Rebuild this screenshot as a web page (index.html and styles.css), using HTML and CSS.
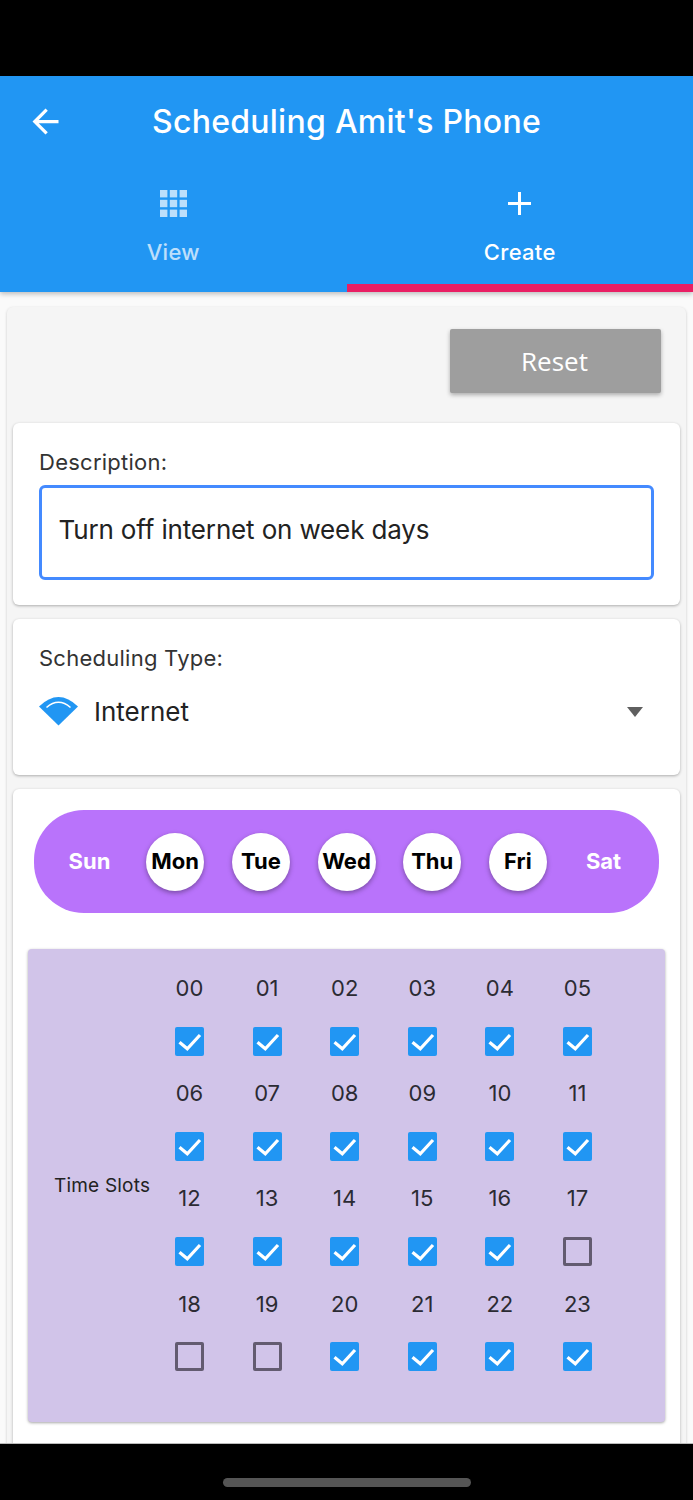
FILE: index.html
```html
<!DOCTYPE html>
<html lang="en">
<head>
<meta charset="utf-8">
<title>Scheduling Amit's Phone</title>
<link rel="stylesheet" href="styles.css">
</head>
<body>
<svg class="defs" width="0" height="0" aria-hidden="true">
  <symbol id="tick" viewBox="0 0 29 29"><path d="M4.5 15.2l7.8 6.6L25 8" fill="none" stroke="#fff" stroke-width="3.2"/></symbol>
</svg>
<div class="screen">
  <div class="status"></div>
  <header class="appbar">
    <div class="titlerow">
      <svg class="back" viewBox="0 0 24 24"><path d="M20 11H7.83l5.59-5.59L12 4l-8 8 8 8 1.41-1.41L7.83 13H20v-2z" fill="#fff"/></svg>
      <h1 class="title">Scheduling Amit's Phone</h1>
    </div>
    <nav class="tabs">
      <div class="tab">
        <svg class="tabicon dim" viewBox="0 0 27 27" fill="#fff">
          <rect x="0" y="0" width="7.4" height="7.4"/><rect x="9.8" y="0" width="7.4" height="7.4"/><rect x="19.6" y="0" width="7.4" height="7.4"/>
          <rect x="0" y="9.8" width="7.4" height="7.4"/><rect x="9.8" y="9.8" width="7.4" height="7.4"/><rect x="19.6" y="9.8" width="7.4" height="7.4"/>
          <rect x="0" y="19.6" width="7.4" height="7.4"/><rect x="9.8" y="19.6" width="7.4" height="7.4"/><rect x="19.6" y="19.6" width="7.4" height="7.4"/>
        </svg>
        <span class="tablabel dim">View</span>
      </div>
      <div class="tab active">
        <svg class="tabicon" viewBox="0 0 27 27"><path d="M12 2h3v10h10v3H15v10h-3V15H2v-3h10z" fill="#fff"/></svg>
        <span class="tablabel">Create</span>
      </div>
    </nav>
  </header>
  <main class="content">
    <div class="outer">
      <div class="actions"><button class="reset">Reset</button></div>

      <section class="card desc">
        <div class="label">Description:</div>
        <div class="input">Turn off internet on week days</div>
      </section>

      <section class="card type">
        <div class="label">Scheduling Type:</div>
        <div class="select">
          <svg class="wifi" viewBox="0 0 39 29">
            <path d="M0 9.5Q19.5 -9.5 39 9.5L19.5 28.5z" fill="#2196f3"/>
            <path d="M7.5 10.5Q19.5 0 31.5 10.5" fill="none" stroke="#fff" stroke-width="1.6"/>
          </svg>
          <span class="selected">Internet</span>
          <span class="caret"></span>
        </div>
      </section>

      <section class="card sched">
        <div class="days">
          <span class="day">Sun</span>
          <span class="day on">Mon</span>
          <span class="day on">Tue</span>
          <span class="day on">Wed</span>
          <span class="day on">Thu</span>
          <span class="day on">Fri</span>
          <span class="day">Sat</span>
        </div>
        <div class="panel">
          <div class="slotlabel">Time Slots</div>
          <div class="slots">
            <div class="slot"><span class="hour">00</span><span class="box"><svg class="tick"><use href="#tick"/></svg></span></div>
            <div class="slot"><span class="hour">01</span><span class="box"><svg class="tick"><use href="#tick"/></svg></span></div>
            <div class="slot"><span class="hour">02</span><span class="box"><svg class="tick"><use href="#tick"/></svg></span></div>
            <div class="slot"><span class="hour">03</span><span class="box"><svg class="tick"><use href="#tick"/></svg></span></div>
            <div class="slot"><span class="hour">04</span><span class="box"><svg class="tick"><use href="#tick"/></svg></span></div>
            <div class="slot"><span class="hour">05</span><span class="box"><svg class="tick"><use href="#tick"/></svg></span></div>
            <div class="slot"><span class="hour">06</span><span class="box"><svg class="tick"><use href="#tick"/></svg></span></div>
            <div class="slot"><span class="hour">07</span><span class="box"><svg class="tick"><use href="#tick"/></svg></span></div>
            <div class="slot"><span class="hour">08</span><span class="box"><svg class="tick"><use href="#tick"/></svg></span></div>
            <div class="slot"><span class="hour">09</span><span class="box"><svg class="tick"><use href="#tick"/></svg></span></div>
            <div class="slot"><span class="hour">10</span><span class="box"><svg class="tick"><use href="#tick"/></svg></span></div>
            <div class="slot"><span class="hour">11</span><span class="box"><svg class="tick"><use href="#tick"/></svg></span></div>
            <div class="slot"><span class="hour">12</span><span class="box"><svg class="tick"><use href="#tick"/></svg></span></div>
            <div class="slot"><span class="hour">13</span><span class="box"><svg class="tick"><use href="#tick"/></svg></span></div>
            <div class="slot"><span class="hour">14</span><span class="box"><svg class="tick"><use href="#tick"/></svg></span></div>
            <div class="slot"><span class="hour">15</span><span class="box"><svg class="tick"><use href="#tick"/></svg></span></div>
            <div class="slot"><span class="hour">16</span><span class="box"><svg class="tick"><use href="#tick"/></svg></span></div>
            <div class="slot"><span class="hour">17</span><span class="box off"></span></div>
            <div class="slot"><span class="hour">18</span><span class="box off"></span></div>
            <div class="slot"><span class="hour">19</span><span class="box off"></span></div>
            <div class="slot"><span class="hour">20</span><span class="box"><svg class="tick"><use href="#tick"/></svg></span></div>
            <div class="slot"><span class="hour">21</span><span class="box"><svg class="tick"><use href="#tick"/></svg></span></div>
            <div class="slot"><span class="hour">22</span><span class="box"><svg class="tick"><use href="#tick"/></svg></span></div>
            <div class="slot"><span class="hour">23</span><span class="box"><svg class="tick"><use href="#tick"/></svg></span></div>
          </div>
        </div>
      </section>
    </div>
  </main>
  <footer class="navbar"><span class="handle"></span></footer>
</div>
</body>
</html>
```
FILE: styles.css
```css
* { box-sizing: border-box; }
html, body { margin: 0; padding: 0; background: #000; }
body { font-family: Inter, Roboto, "Liberation Sans", sans-serif; color: #222; }
.defs { display: block; height: 0; }
.screen { width: 693px; height: 1500px; display: flex; flex-direction: column; overflow: hidden; }
.status { height: 76px; flex: none; background: #000; }

.appbar { height: 216px; flex: none; background: #2196f3; color: #fff; display: flex; flex-direction: column; box-shadow: 0 2px 5px rgba(0,0,0,.25); z-index: 2; }
.titlerow { height: 90px; flex: none; position: relative; display: flex; align-items: center; justify-content: center; }
.back { width: 39px; height: 39px; position: absolute; left: 26px; top: 26px; }
.title { margin: 0; font-size: 32px; font-weight: 500; letter-spacing: .27px; }
.tabs { flex: 1; display: flex; }
.tab { flex: 1; display: flex; flex-direction: column; align-items: center; padding-top: 24px; border-bottom: 8px solid transparent; }
.tab.active { border-bottom-color: #e91e63; }
.tabicon { width: 27px; height: 27px; display: block; }
.tablabel { margin-top: 22px; font-size: 22px; line-height: 26px; font-weight: 500; letter-spacing: .3px; }
.dim { opacity: .7; }

.content { height: 1152px; flex: none; background: #fafafa; padding: 15px 7px 0; overflow: hidden; }
.outer { height: 1300px; background: #f5f5f5; border-radius: 6px; padding: 22px 6px 0; box-shadow: 0 1px 3px rgba(0,0,0,.2); }
.actions { display: flex; justify-content: flex-end; padding-right: 19px; margin-bottom: 30px; }
.reset { width: 211px; height: 64px; border: 0; border-radius: 2px; background: #9e9e9e; color: #fff; font-family: "Open Sans", sans-serif; font-size: 26px; box-shadow: 0 2px 4px rgba(0,0,0,.3); padding: 0 2px 0 0; }

.card { background: #fff; border-radius: 6px; box-shadow: 0 1px 3px rgba(0,0,0,.3); margin-bottom: 14px; padding: 0 26px; }
.label { font-size: 22px; line-height: 26px; color: #333; letter-spacing: .25px; }
.desc { height: 182px; padding-top: 26px; }
.input { margin-top: 10px; height: 95px; border: 3px solid #448aff; border-radius: 6px; padding: 0 16.5px; font-size: 26px; line-height: 84px; color: #222; letter-spacing: -.15px; }
.type { height: 156px; padding-top: 26px; }
.select { display: flex; align-items: center; margin-top: 25px; height: 30px; }
.wifi { width: 39px; height: 29px; flex: none; }
.selected { margin-left: 16px; font-size: 26px; color: #222; flex: 1; }
.caret { width: 0; height: 0; border-left: 8px solid transparent; border-right: 8px solid transparent; border-top: 10px solid #5f5f5f; margin: 2px 11px 0 0; }

.sched { padding: 21px 15px 0; height: 700px; margin-bottom: 0; }
.days { height: 103px; margin: 0 6px; background: #b973fb; border-radius: 50px; display: flex; justify-content: center; align-items: center; gap: 27.7px; }
.day { width: 58px; height: 58px; padding-bottom: 2px; border-radius: 50%; display: flex; align-items: center; justify-content: center; color: #fff; font-size: 22px; font-weight: 700; flex: none; }
.day.on { background: #fff; color: #000; box-shadow: 0 2px 5px rgba(0,0,0,.35); }

.panel { margin-top: 36px; height: 473px; background: #d1c4e9; border-radius: 4px; box-shadow: 0 1px 3px rgba(0,0,0,.35); display: flex; align-items: center; padding-left: 26px; }
.slotlabel { width: 96.7px; flex: none; font-size: 19px; white-space: nowrap; color: #222; letter-spacing: .2px; }
.slots { align-self: flex-start; margin-top: 12.6px; display: grid; grid-template-columns: repeat(6, 77.6px); grid-auto-rows: 105.25px; }
.slot { display: flex; flex-direction: column; align-items: center; }
.hour { height: 52.6px; display: flex; align-items: center; font-size: 22px; color: #2b2b33; }
.box { width: 29px; height: 29px; margin-top: 12.4px; border-radius: 2px; background: #2196f3; display: block; }
.box.off { background: transparent; border: 3px solid #635b70; }
.tick { width: 29px; height: 29px; display: block; }

.navbar { flex: 1; background: #000; display: flex; justify-content: center; padding-top: 34px; box-shadow: 0 -1px 0 #bbb; z-index: 3; }
.handle { width: 248px; height: 9px; border-radius: 5px; background: #555; }
```
